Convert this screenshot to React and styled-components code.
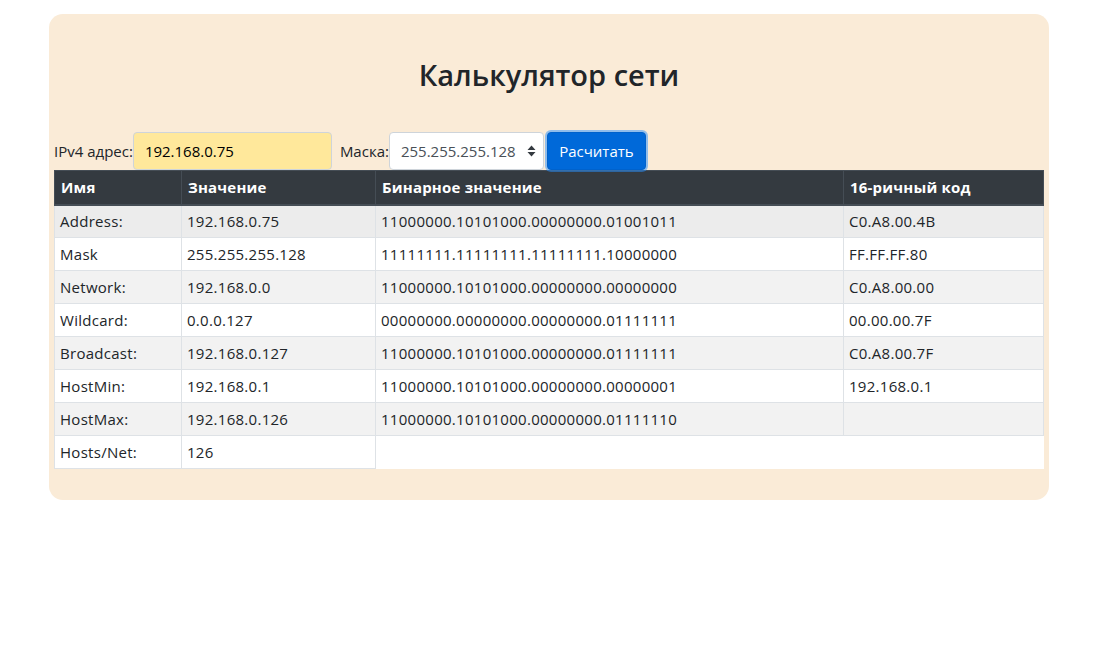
import React from 'react';
import styled, { createGlobalStyle } from 'styled-components';

const GlobalStyle = createGlobalStyle`
  body {
    margin: 0;
    background: #fff;
    font-family: "Open Sans", "Noto Sans", sans-serif;
    color: #212529;
  }
`;

const Page = styled.div`
  padding: 14px 0 0 49px;
`;

const Card = styled.div`
  width: 1000px;
  box-sizing: border-box;
  background: antiquewhite;
  border-radius: 14px;
  padding: 42px 5px 31px;
`;

const Title = styled.h2`
  margin: 0 0 38px;
  font-size: 29px;
  line-height: 38px;
  font-weight: 600;
  text-align: center;
  color: #212529;
`;

const Form = styled.div`
  display: flex;
  align-items: center;
  height: 38px;
`;

const Label = styled.label`
  font-size: 15px;
  margin-left: ${props => props.offset || 0}px;
`;

const Input = styled.input`
  box-sizing: border-box;
  width: 199px;
  height: 38px;
  padding: 0 11px;
  font-family: inherit;
  font-size: 15px;
  color: #000;
  background: #ffe89b;
  border: 1px solid #ced4da;
  border-radius: 4px;
  outline: none;
`;

const SelectWrap = styled.div`
  position: relative;
  width: 155px;
  height: 38px;
`;

const Select = styled.select`
  box-sizing: border-box;
  width: 100%;
  height: 38px;
  padding: 0 24px 0 11px;
  font-family: inherit;
  font-size: 15px;
  color: #495057;
  background: #fff;
  border: 1px solid #ced4da;
  border-radius: 4px;
  appearance: none;
  outline: none;
`;

const Arrows = styled.svg`
  position: absolute;
  right: 8px;
  top: 13px;
  pointer-events: none;
`;

const Button = styled.button`
  box-sizing: border-box;
  margin-left: 3px;
  width: 99px;
  height: 38px;
  font-family: inherit;
  font-size: 15px;
  color: #fff;
  background: #0069d9;
  border: 1px solid #0062cc;
  border-radius: 4px;
  box-shadow: 0 0 0 2px rgba(38, 143, 255, 0.5);
  cursor: pointer;
`;

const Table = styled.table`
  width: 989px;
  border-collapse: collapse;
  background: #fff;
  font-size: 15px;
  table-layout: fixed;
`;

const Th = styled.th`
  height: 34px;
  box-sizing: border-box;
  padding: 0 6px;
  text-align: left;
  font-weight: 700;
  letter-spacing: 0.2px;
  color: #fff;
  background: #343a40;
  border: 1px solid #454d55;
  border-bottom-width: 2px;
  width: ${props => props.w}px;
`;

const Tr = styled.tr`
  background: ${props => props.bg};
`;

const Td = styled.td`
  height: 33px;
  box-sizing: border-box;
  padding: 0 5px;
  border: 1px solid #dee2e6;
  white-space: nowrap;
  letter-spacing: 0.28px;
`;

const rows = [
  ['Address:', '192.168.0.75', '11000000.10101000.00000000.01001011', 'C0.A8.00.4B'],
  ['Mask', '255.255.255.128', '11111111.11111111.11111111.10000000', 'FF.FF.FF.80'],
  ['Network:', '192.168.0.0', '11000000.10101000.00000000.00000000', 'C0.A8.00.00'],
  ['Wildcard:', '0.0.0.127', '00000000.00000000.00000000.01111111', '00.00.00.7F'],
  ['Broadcast:', '192.168.0.127', '11000000.10101000.00000000.01111111', 'C0.A8.00.7F'],
  ['HostMin:', '192.168.0.1', '11000000.10101000.00000000.00000001', '192.168.0.1'],
  ['HostMax:', '192.168.0.126', '11000000.10101000.00000000.01111110', ''],
  ['Hosts/Net:', '126'],
];

const rowBg = i => (i === 0 ? '#ececec' : i % 2 === 0 ? '#f2f2f2' : '#fff');

export default function App() {
  return (
    <Page>
      <GlobalStyle />
      <Card>
        <Title>Калькулятор сети</Title>
        <Form>
          <Label>IPv4 адрес:</Label>
          <Input defaultValue="192.168.0.75" />
          <Label offset={8}>Маска:</Label>
          <SelectWrap>
            <Select defaultValue="255.255.255.128">
              <option>255.255.255.128</option>
            </Select>
            <Arrows width="9" height="12" viewBox="0 0 9 12">
              <path d="M4.5 0.5 L8.5 5 H0.5 Z M4.5 11.5 L8.5 7 H0.5 Z" fill="#343a40" />
            </Arrows>
          </SelectWrap>
          <Button>Расчитать</Button>
        </Form>
        <Table>
          <thead>
            <tr>
              <Th w={127}>Имя</Th>
              <Th w={194}>Значение</Th>
              <Th w={468}>Бинарное значение</Th>
              <Th w={200}>16-ричный код</Th>
            </tr>
          </thead>
          <tbody>
            {rows.map((r, i) => (
              <Tr key={r[0]} bg={rowBg(i)}>
                {r.map((c, j) => (
                  <Td key={j}>{c}</Td>
                ))}
              </Tr>
            ))}
          </tbody>
        </Table>
      </Card>
    </Page>
  );
}
